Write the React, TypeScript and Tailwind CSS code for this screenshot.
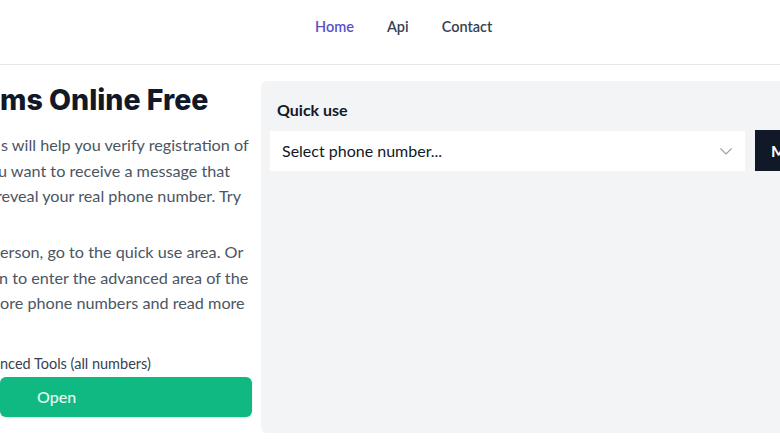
import React from "react";

const body = "font-['Lato',sans-serif]";

export default function App() {
  return (
    <div className={`w-[780px] h-[440px] overflow-hidden bg-white ${body}`}>
      <header className="h-[65px] border-b border-[#e5e7eb] flex items-start pt-[18px] pl-[315px] gap-[33px] text-[14.5px] leading-[18px] font-semibold">
        <a className="text-[#5b50c8]">Home</a>
        <a className="text-[#374151]">Api</a>
        <a className="text-[#374151]">Contact</a>
      </header>
      <main className="flex pt-[16px] gap-[8px]">
        <section className="w-[253px] shrink-0 overflow-hidden flex flex-col">
          <h1 className="font-['Inter',sans-serif] font-extrabold text-[28.5px] leading-[40px] text-[#111827] whitespace-nowrap -mt-[1px]">
            ms Online Free
          </h1>
          <div className="mt-[12px] text-[16.2px] leading-[25.5px] text-[#4b5563] whitespace-nowrap">
            <div className="ml-[1px]">s will help you verify registration of</div>
            <div className="-ml-[2px]">u want to receive a message that</div>
            <div className="-ml-[4px]">reveal your real phone number. Try</div>
            <div>&nbsp;</div>
            <div className="mt-[5px]">erson, go to the quick use area. Or</div>
            <div className="-ml-[1px]">n to enter the advanced area of the</div>
            <div>ore phone numbers and read more</div>
          </div>
          <div className="mt-[39px] text-[14.5px] leading-[18px] text-[#374151] whitespace-nowrap">nced Tools (all numbers)</div>
          <button className="mt-[4px] h-[40px] w-[252px] rounded-md bg-[#10b981] text-white/90 text-[16px] font-medium shadow-sm flex items-center pl-[37px]">
            Open
          </button>
        </section>
        <section className="flex-1 h-[352px] bg-[#f3f4f6] rounded-l-md pt-[18px]">
          <h2 className="pl-[16px] text-[16px] font-bold text-[#111827] leading-[22px]">Quick use</h2>
          <div className="flex items-center mt-[10px] pl-[9px] gap-[10px]">
            <div className="w-[475px] h-[40px] bg-white flex items-center justify-between pl-[12px] pr-[10px] text-[16px] text-[#111827]">
              <span>Select phone number...</span>
              <svg width="18" height="18" viewBox="0 0 24 24" fill="none" stroke="#9ca3af" strokeWidth="1.5" strokeLinecap="round" strokeLinejoin="round">
                <path d="M5 9l7 7 7-7" />
              </svg>
            </div>
            <button className="h-[41px] bg-[#111827] text-white font-bold text-[16px] pl-[16px] pr-[20px] -mt-[1px] whitespace-nowrap">
              More
            </button>
          </div>
        </section>
      </main>
    </div>
  );
}
